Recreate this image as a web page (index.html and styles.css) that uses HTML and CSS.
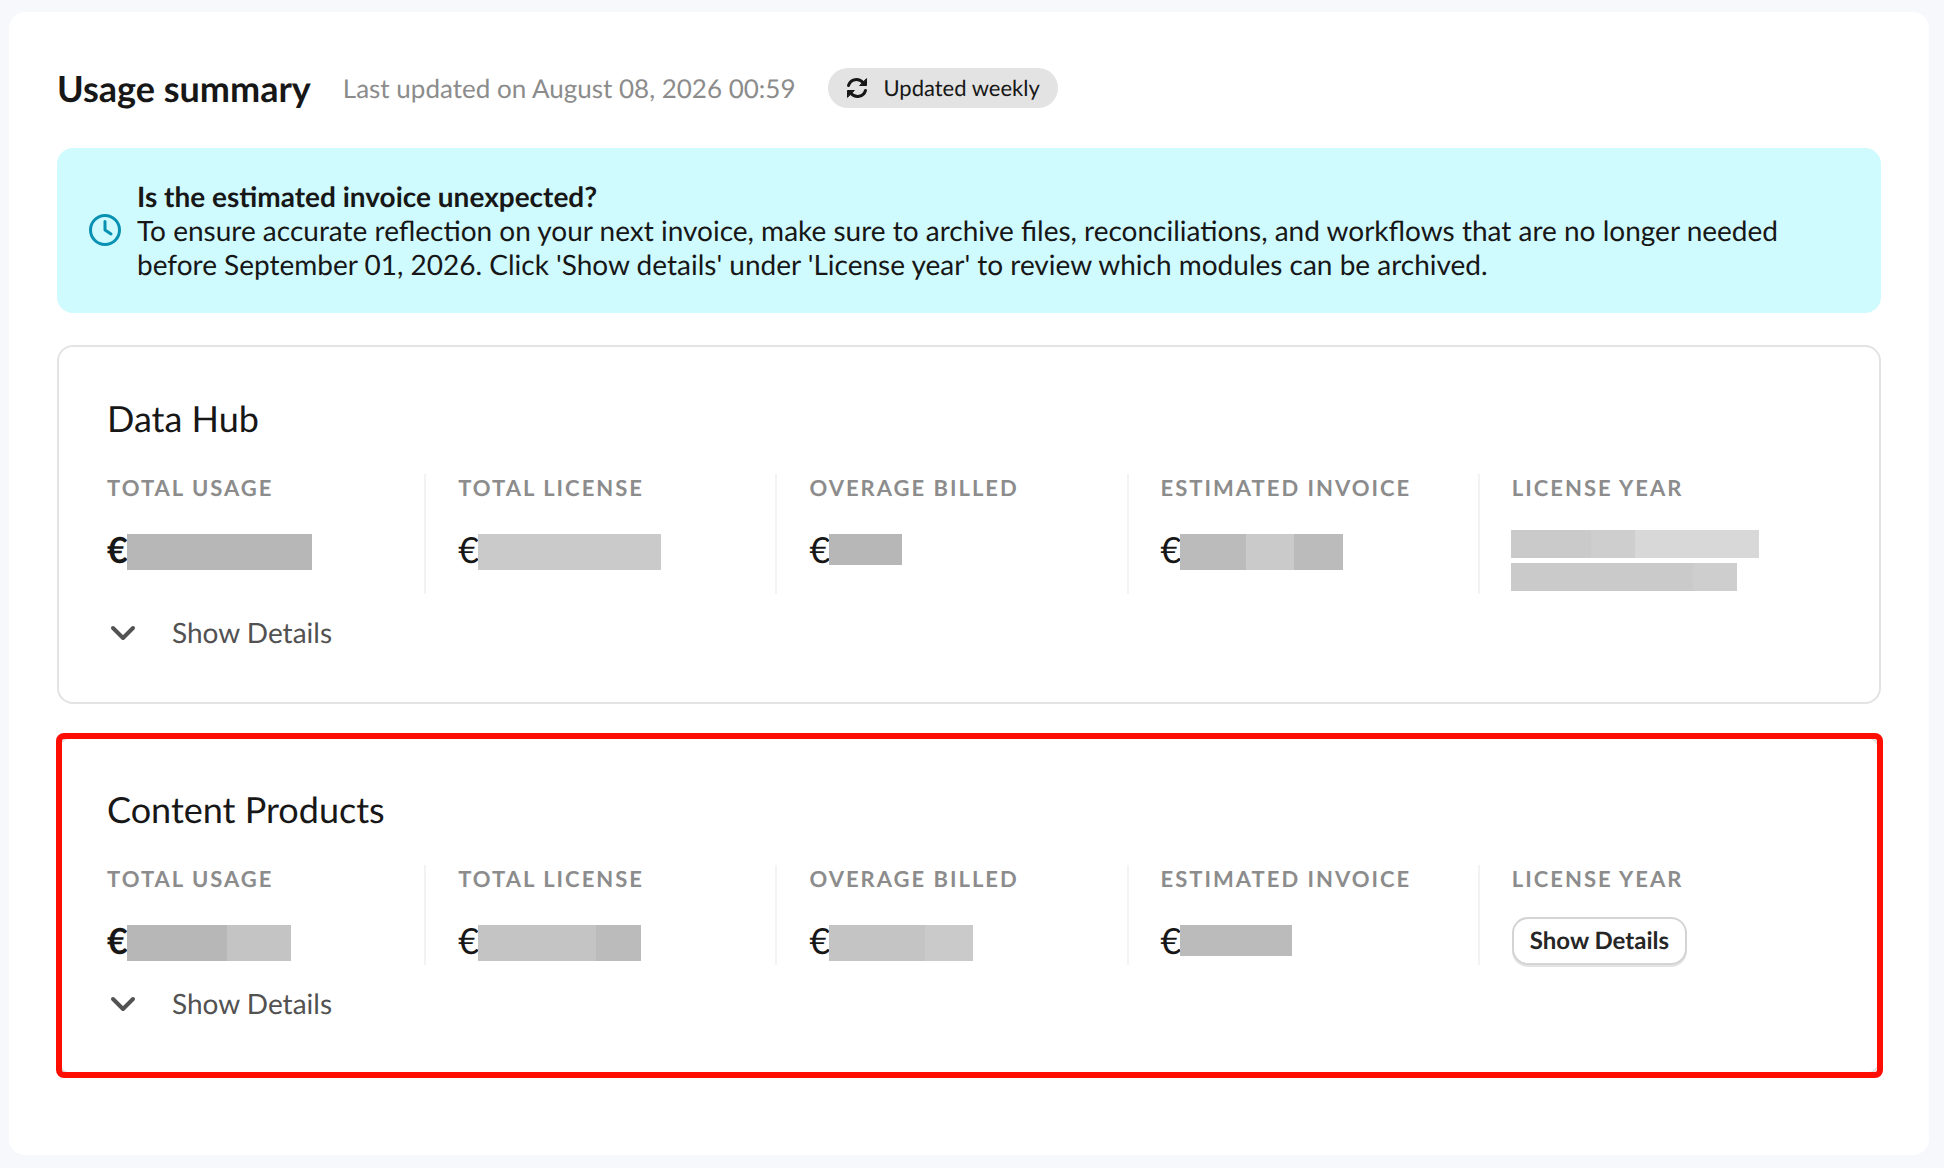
FILE: index.html
```html
<!DOCTYPE html>
<html lang="en">
<head>
<meta charset="utf-8">
<title>Usage summary</title>
<link rel="stylesheet" href="styles.css">
</head>
<body>
<main class="panel">

<header class="summary-header">
<h1>Usage summary</h1>
<span class="updated">Last updated on August 08, 2026 00:59</span>
<span class="badge">
<svg width="22" height="22" viewBox="0 0 22 22" fill="none" stroke="currentColor" stroke-width="3" stroke-linecap="round" aria-hidden="true">
<path d="M2.500 8.500C4.500 2 12.500 .500 17.500 6"/>
<path d="M19.500 13.500C17.500 20 9.500 21.500 4.500 16"/>
<path d="M20.500 2v6.500H14z M1.500 20v-6.500H8z" fill="currentColor" stroke-width="1" stroke-linejoin="round"/>
</svg>
Updated weekly
</span>
</header>

<section class="notice">
<svg width="32" height="32" viewBox="0 0 32 32" fill="none" stroke="currentColor" stroke-width="3" stroke-linecap="round" stroke-linejoin="round" aria-hidden="true">
<circle cx="16" cy="16" r="14.500"/>
<path d="M16 7.500V16l6 4"/>
</svg>
<p><b>Is the estimated invoice unexpected?</b><br>
To ensure accurate reflection on your next invoice, make sure to archive files, reconciliations, and workflows that are no longer needed before September 01, 2026. Click 'Show details' under 'License year' to review which modules can be archived.</p>
</section>

<section class="card">
<h2>Data Hub</h2>
<dl class="stats">
<div class="stat">
<dt>Total usage</dt>
<dd class="strong">€<span class="mask"><i class="tone-1" style="width:185px"></i></span></dd>
</div>
<div class="stat">
<dt>Total license</dt>
<dd>€<span class="mask"><i class="tone-4" style="width:183px"></i></span></dd>
</div>
<div class="stat">
<dt>Overage billed</dt>
<dd>€<span class="mask short"><i class="tone-1" style="width:73px"></i></span></dd>
</div>
<div class="stat">
<dt>Estimated invoice</dt>
<dd>€<span class="mask"><i class="tone-2" style="width:66px"></i><i class="tone-4" style="width:48px"></i><i class="tone-2" style="width:49px"></i></span></dd>
</div>
<div class="stat">
<dt>License year</dt>
<dd class="period">
<span class="mask line"><i class="tone-4" style="width:80px"></i><i class="tone-5" style="width:44px"></i><i class="tone-6" style="width:124px"></i></span>
<span class="mask line"><i class="tone-4" style="width:182px"></i><i class="tone-5" style="width:44px"></i></span>
</dd>
</div>
</dl>
<button class="toggle" type="button">
<svg width="32" height="32" viewBox="0 0 32 32" fill="none" stroke="currentColor" stroke-width="4" stroke-linecap="round" stroke-linejoin="round" aria-hidden="true"><path d="M6 12l10 10 10-10"/></svg>
Show Details
</button>
</section>

<section class="card highlight">
<h2>Content Products</h2>
<dl class="stats">
<div class="stat">
<dt>Total usage</dt>
<dd class="strong">€<span class="mask"><i class="tone-1" style="width:100px"></i><i class="tone-3" style="width:64px"></i></span></dd>
</div>
<div class="stat">
<dt>Total license</dt>
<dd>€<span class="mask"><i class="tone-3" style="width:118px"></i><i class="tone-2" style="width:45px"></i></span></dd>
</div>
<div class="stat">
<dt>Overage billed</dt>
<dd>€<span class="mask"><i class="tone-3" style="width:96px"></i><i class="tone-4" style="width:48px"></i></span></dd>
</div>
<div class="stat">
<dt>Estimated invoice</dt>
<dd>€<span class="mask short"><i class="tone-2" style="width:112px"></i></span></dd>
</div>
<div class="stat">
<dt>License year</dt>
<dd><button class="details" type="button">Show Details</button></dd>
</div>
</dl>
<button class="toggle" type="button">
<svg width="32" height="32" viewBox="0 0 32 32" fill="none" stroke="currentColor" stroke-width="4" stroke-linecap="round" stroke-linejoin="round" aria-hidden="true"><path d="M6 12l10 10 10-10"/></svg>
Show Details
</button>
</section>

</main>
</body>
</html>
```
FILE: styles.css
```css
* { box-sizing: border-box; }

body
{ margin: 12px 15px 12px 9px;
background: #f7f8fc;
color: #171717;
font-family: Lato, "Liberation Sans", sans-serif;
font-size: 28px;
line-height: 34px;
text-rendering: geometricPrecision;
}

h1, h2, p, dl, dd { margin: 0; }

button
{ font-family: inherit;
text-rendering: inherit;
cursor: pointer;
}

.panel
{ padding: 48px;
background: #fff;
border-radius: 16px;
}

/* Header */

.summary-header
{ display: flex;
align-items: center;
gap: 32px;
min-height: 56px;
margin-bottom: 32px;
}

h1
{ font-size: 36px;
line-height: 48px;
font-weight: bold;
}

.updated
{ color: #8c8c8c;
font-size: 26px;
}

.badge
{ display: flex;
align-items: center;
gap: 16px;
height: 40px;
padding: 0 18px;
border-radius: 20px;
background: #e3e3e3;
font-size: 22px;
}

/* Notice */

.notice
{ display: flex;
align-items: center;
gap: 16px;
margin-bottom: 32px;
padding: 31px 32px 32px;
border-radius: 16px;
background: #cffafe;
}

.notice svg
{ flex: none;
color: #0891b2;
}

/* Cards */

.card
{ position: relative;
margin-bottom: 32px;
padding: 48px;
border: 2px solid #e3e3e3;
border-radius: 16px;
}

.highlight::after
{ content: "";
position: absolute;
inset: -5px -4px -5px -3px;
border: 6px solid #ff0d00;
border-radius: 8px;
pointer-events: none;
}

h2
{ margin-bottom: 32px;
font-size: 36px;
line-height: 47px;
font-weight: normal;
}

.stats
{ display: grid;
grid-template-columns: repeat(5, 1fr);
gap: 32px;
}

.stat { border-right: 2px solid #f3f3f3; }

.stat:last-child { border-right: 0; }

dt
{ margin-bottom: 24px;
color: #8c8c8c;
font-size: 22px;
line-height: 28px;
font-weight: bold;
letter-spacing: 2px;
text-transform: uppercase;
}

dd
{ display: flex;
align-items: flex-start;
font-size: 36px;
line-height: 46px;
}

.strong { font-weight: bold; }

.period
{ flex-direction: column;
gap: 5px;
padding: 4px 0 3px;
}

/* Masked amounts */

.mask
{ display: flex;
height: 36px;
margin: 8px 0 0 -1px;
}

.short { height: 31px; }

.line
{ height: 28px;
margin-top: 0;
}

.tone-1 { background: #b7b7b7; }
.tone-2 { background: #bbb; }
.tone-3 { background: #c4c4c4; }
.tone-4 { background: #cacaca; }
.tone-5 { background: #cecece; }
.tone-6 { background: #d8d8d8; }

/* Buttons */

.toggle
{ display: flex;
align-items: center;
gap: 33px;
height: 44px;
margin-top: 16px;
padding: 0;
border: 0;
background: none;
color: #525252;
font-size: 28px;
}

.details
{ height: 48px;
padding: 0 16px 2px;
border: 2px solid #d4d4d4;
border-radius: 16px;
background: #fff;
box-shadow: 0 2px 0 #e3e3e3;
color: #262626;
font-size: 24px;
font-weight: bold;
}
```
